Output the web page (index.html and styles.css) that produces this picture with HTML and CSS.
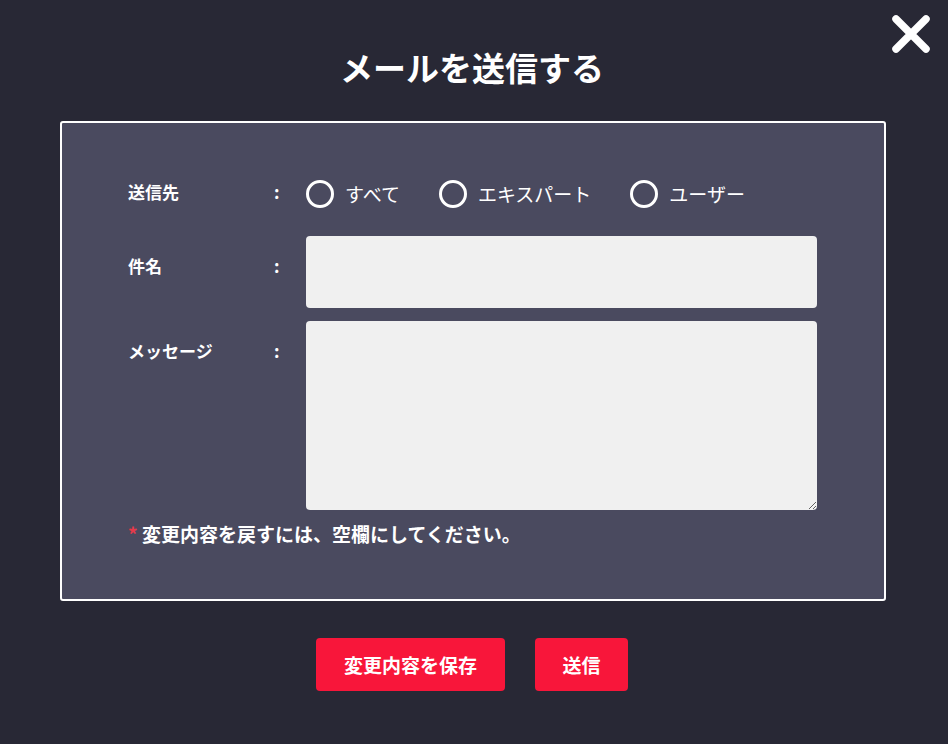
FILE: index.html
```html
<!DOCTYPE html>
<html lang="ja">
<head>
<meta charset="utf-8">
<title>メールを送信する</title>
<link rel="stylesheet" href="styles.css">
</head>
<body>
<div class="modal">
  <button class="close" aria-label="閉じる">
    <svg width="38" height="38" viewBox="0 0 38 38"><path d="M4 4L34 34M34 4L4 34" stroke="#fff" stroke-width="7.5" stroke-linecap="round"/></svg>
  </button>
  <h1 class="title">メールを送信する</h1>
  <div class="panel">
    <div class="row row-radio">
      <div class="label">送信先</div>
      <div class="colon">:</div>
      <div class="radios">
        <label class="radio"><span class="circle"></span><span class="rtext">すべて</span></label>
        <label class="radio"><span class="circle"></span><span class="rtext">エキスパート</span></label>
        <label class="radio"><span class="circle"></span><span class="rtext">ユーザー</span></label>
      </div>
    </div>
    <div class="row row-field">
      <div class="label">件名</div>
      <div class="colon">:</div>
      <input class="input" type="text">
    </div>
    <div class="row row-field row-msg">
      <div class="label">メッセージ</div>
      <div class="colon">:</div>
      <textarea class="textarea"></textarea>
    </div>
    <p class="note"><span class="star">*</span> 変更内容を戻すには、空欄にしてください。</p>
  </div>
  <div class="actions">
    <button class="btn btn-save">変更内容を保存</button>
    <button class="btn btn-send">送信</button>
  </div>
</div>
</body>
</html>
```
FILE: styles.css
```css
html, body {
  margin: 0;
  padding: 0;
  background: #282835;
  font-family: "Noto Sans CJK JP", "Noto Sans", sans-serif;
  color: #fff;
}
.modal {
  position: relative;
  width: 948px;
  height: 744px;
  padding-top: 46px;
  box-sizing: border-box;
}
.close {
  position: absolute;
  top: 15px;
  left: 892px;
  width: 38px;
  height: 38px;
  padding: 0;
  border: none;
  background: none;
  cursor: pointer;
}
.close svg { display: block; }
.title {
  margin: 0;
  padding-right: 4px;
  text-align: center;
  font-size: 33px;
  line-height: 42px;
  font-weight: 700;
}
.panel {
  margin: 33px 0 0 60px;
  width: 826px;
  box-sizing: border-box;
  border: 2px solid #fff;
  border-radius: 3px;
  background: #4a4a5f;
  padding: 57px 0 52px 66px;
}
.row {
  display: grid;
  grid-template-columns: 146px 32px 511px;
}
.row-radio {
  align-items: center;
  height: 28px;
}
.row-radio .label, .row-radio .colon { align-self: start; }
.row-field { margin-top: 28px; }
.row-msg { margin-top: 13px; }
.label, .colon {
  font-size: 17px;
  font-weight: 700;
  line-height: 24px;
}
.row-field .label, .row-field .colon { margin-top: 18px; }
.radios {
  display: flex;
  align-items: center;
}
.radio {
  display: flex;
  align-items: center;
  margin-right: 39px;
}
.circle {
  width: 28px;
  height: 28px;
  box-sizing: border-box;
  border: 3px solid #fff;
  border-radius: 50%;
}
.rtext {
  margin-left: 11px;
  font-size: 19px;
  line-height: 28px;
}
.input, .textarea {
  display: block;
  margin: 0;
  border: none;
  outline: none;
  border-radius: 4px;
  background: #f0f0f0;
  width: 511px;
  box-sizing: border-box;
  font-family: inherit;
  font-size: 16px;
  padding: 8px 12px;
}
.input { height: 72px; }
.textarea { height: 189px; resize: vertical; }
.note {
  margin: 11px 0 0;
  font-size: 19px;
  font-weight: 700;
  line-height: 26px;
}
.star { color: #e53a4a; }
.actions {
  display: flex;
  justify-content: center;
  gap: 30px;
  margin-top: 37px;
  padding-right: 4px;
}
.btn {
  height: 53px;
  border: none;
  border-radius: 4px;
  background: #f8163a;
  color: #fff;
  font-family: inherit;
  font-size: 19px;
  font-weight: 700;
  cursor: pointer;
  padding: 0;
}
.btn-save { width: 189px; }
.btn-send { width: 93px; }
```
